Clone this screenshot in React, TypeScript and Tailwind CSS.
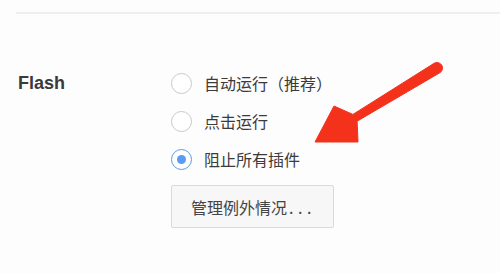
import React from "react";

const options = [
  { label: "自动运行（推荐）", checked: false },
  { label: "点击运行", checked: false },
  { label: "阻止所有插件", checked: true },
];

function Radio({ checked }: { checked: boolean }) {
  return (
    <span
      className={`flex h-[21px] w-[21px] shrink-0 items-center justify-center rounded-full border bg-white ${
        checked ? "border-[#5b9ae8]" : "border-[#c9c9c9]"
      }`}
    >
      {checked && <span className="h-[9px] w-[9px] rounded-full bg-[#5a9cf2]" />}
    </span>
  );
}

export default function App() {
  return (
    <div
      className="relative h-[273px] w-[500px] overflow-hidden bg-[#fdfdfd] text-[#333]"
      style={{ fontFamily: '"Liberation Sans", "Noto Sans CJK SC", sans-serif' }}
    >
      <div className="ml-4 mt-[12px] h-[2px] bg-[#efefef]" />

      <div className="flex pt-[50px]">
        {/* label column */}
        <div className="w-[171px] shrink-0 pl-[18px]">
          <div className="flex h-[38px] items-center text-[18px] font-bold text-[#3a3a3a]">Flash</div>
        </div>

        {/* options column */}
        <div className="flex flex-col">
          {options.map((o) => (
            <label key={o.label} className="flex h-[38px] items-center gap-3">
              <Radio checked={o.checked} />
              <span className="text-[16px] text-[#3b3b3b]" style={{ fontFamily: '"Noto Sans CJK SC", sans-serif' }}>
                {o.label}
              </span>
            </label>
          ))}
          <button
            className="mt-[7px] flex h-[43px] w-[163px] items-center justify-center rounded-[2px] border border-[#dadada] bg-[#f7f7f7] pl-[2px] text-[16px] text-[#444]"
            style={{ fontFamily: '"Noto Sans CJK SC", sans-serif' }}
          >
            管理例外情况<span className="ml-[2px] tracking-[4.5px]">...</span>
          </button>
        </div>
      </div>

      {/* annotation arrow */}
      <svg className="absolute left-0 top-0" width="500" height="273" viewBox="0 0 500 273">
        <path
          d="M315 142 L334 106 L352.9 114.4 L434.1 63.3 A5.5 5.5 0 0 1 439.9 72.7 L357.1 121.2 L358 142 Z"
          fill="#f4321c"
          strokeLinejoin="round"
          stroke="#f4321c"
          strokeWidth="1"
        />
      </svg>
    </div>
  );
}
